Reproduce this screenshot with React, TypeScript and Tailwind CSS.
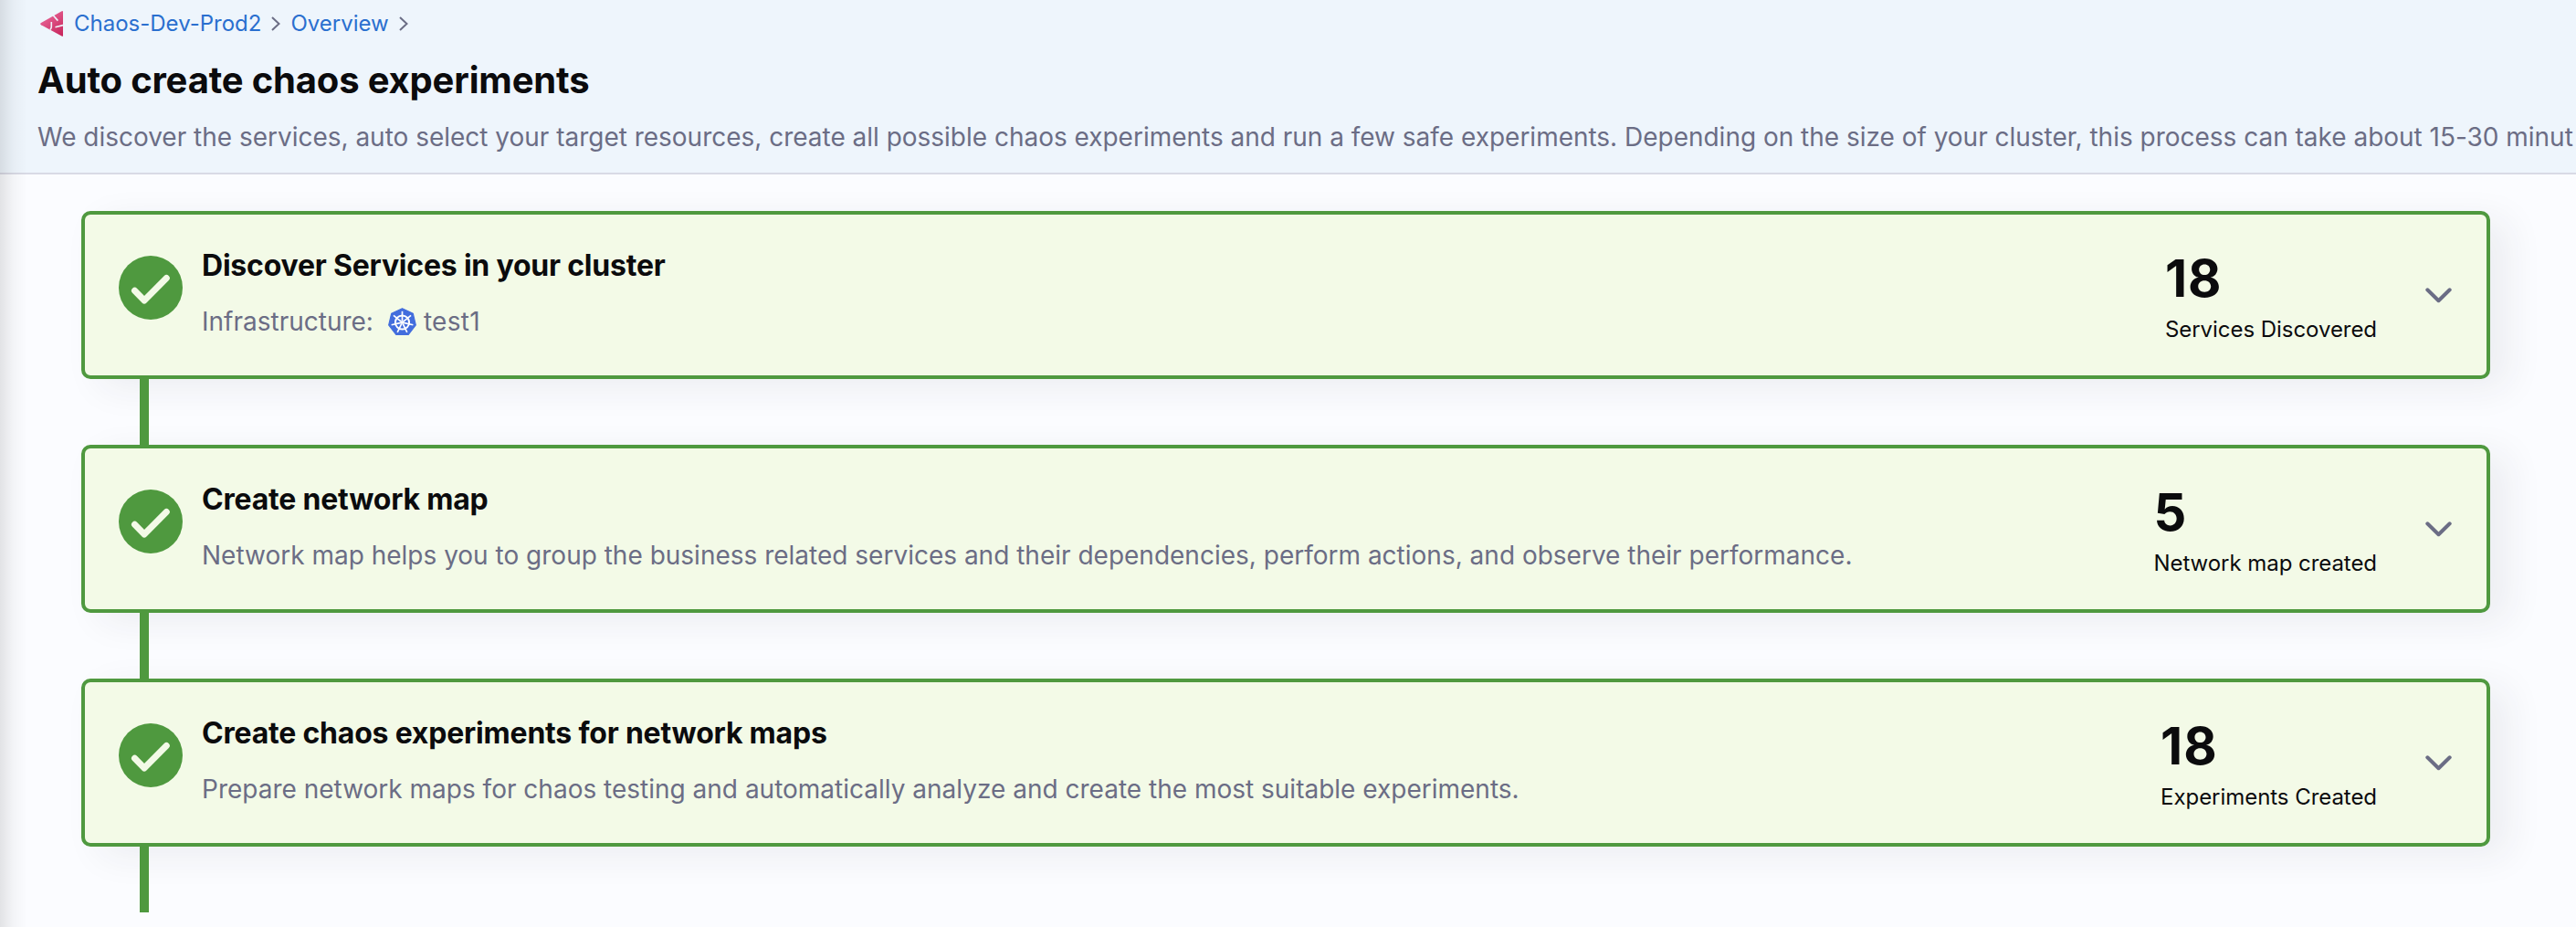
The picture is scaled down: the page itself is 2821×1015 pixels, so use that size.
import React from "react";

const steps = [
  { title: "Discover Services in your cluster", infra: "test1", count: "18", label: "Services Discovered" },
  {
    title: "Create network map",
    text: "Network map helps you to group the business related services and their dependencies, perform actions, and observe their performance.",
    count: "5",
    label: "Network map created",
  },
  {
    title: "Create chaos experiments for network maps",
    text: "Prepare network maps for chaos testing and automatically analyze and create the most suitable experiments.",
    count: "18",
    label: "Experiments Created",
  },
];

function ChaosLogo() {
  return (
    <svg className="h-7 w-[25px]" viewBox="0 0 25 28">
      <defs>
        <linearGradient id="chaos" x1="0.2" y1="0" x2="0.9" y2="1">
          <stop offset="0" stopColor="#ea6a9c" />
          <stop offset="1" stopColor="#c8265c" />
        </linearGradient>
      </defs>
      <path d="M23.600 0.300Q25 -0.300 25 1V27Q25 28.300 23.600 27.600L1 15.300Q-0.600 14.200 1 13.100Z" fill="url(#chaos)" />
      <path d="M14.200 4.800L19.400 10.600M12.300 12V17.500Q12.300 18.500 11 20.500M16.500 17.800L25 15.600" stroke="#eff5fc" strokeWidth="1.600" fill="none" />
    </svg>
  );
}

function BreadcrumbChevron() {
  return (
    <svg className="h-4 w-[10px]" viewBox="0 0 10 16" fill="none" stroke="#6b6d85" strokeWidth="2">
      <path d="M1 1L8.500 8L1 15" />
    </svg>
  );
}

function CheckCircle() {
  return (
    <svg className="h-[70px] w-[70px] shrink-0" viewBox="0 0 70 70">
      <circle cx="35" cy="35" r="35" fill="#4f993f" />
      <path d="M17.500 38.300L28 49L52.300 24.500" fill="none" stroke="#f3fae7" strokeWidth="7" strokeLinecap="round" strokeLinejoin="round" />
    </svg>
  );
}

function KubernetesIcon() {
  const spokes = [0, 1, 2, 3, 4, 5, 6];
  return (
    <svg className="h-[31px] w-[31px]" viewBox="0 0 31 31">
      <path d="M15.500 0.800L27.300 6.300L30.300 19L22.200 29.500H8.800L0.700 19L3.700 6.300Z" fill="#426ddd" stroke="#426ddd" strokeWidth="1.200" strokeLinejoin="round" />
      <g stroke="#fff" fill="none">
        <circle cx="15.500" cy="16" r="7.600" strokeWidth="2" />
        {spokes.map((n) => (
          <path key={n} d="M15.500 14.500V3.800" strokeWidth="1.700" transform={`rotate(${(n * 360) / 7} 15.500 16)`} />
        ))}
      </g>
      <circle cx="15.500" cy="16" r="1.800" fill="#fff" />
    </svg>
  );
}

export default function App() {
  return (
    <div className="relative h-[1015px] overflow-hidden bg-[#fbfcff] font-['Inter',sans-serif] text-[#0b0b0d]">
      <header className="h-[191px] border-b-2 border-[#d9dae5] bg-[#eef5fc] pl-[41px] whitespace-nowrap">
        <nav className="flex h-[52px] items-center pl-[3px] text-[24px] text-[#2a6fcf]">
          <ChaosLogo />
          <a className="ml-3">Chaos-Dev-Prod2</a>
          <span className="mr-[11px] ml-[11px]"><BreadcrumbChevron /></span>
          <a>Overview</a>
          <span className="ml-[11px]"><BreadcrumbChevron /></span>
        </nav>
        <h1 className="mt-[12px] text-[40px] leading-[48px] font-bold tracking-[-0.180px]">Auto create chaos experiments</h1>
        <p className="mt-[18px] text-[28px] leading-[40px] tracking-[-0.015px] text-[#6b6d85]">
          We discover the services, auto select your target resources, create all possible chaos experiments and run a few safe experiments. Depending on the size of your cluster, this process can take about 15-30 minut
        </p>
      </header>
      <main className="pt-10 pr-[94px] pl-[89px]">
        {steps.map((s) => (
          <section key={s.title}>
            <div className="flex h-[184px] rounded-[10px] border-4 border-[#4f993f] bg-[#f3fae7] pr-[38px] pl-[37px] shadow-[20px_10px_40px_rgba(40,41,61,0.07)]">
              <div className="pt-[45px]"><CheckCircle /></div>
              <div className="ml-[21px] flex-1 pt-[36px]">
                <h2 className="text-[32px] leading-[40px] font-bold tracking-[-0.210px]">{s.title}</h2>
                <div className="mt-[21px] flex items-center text-[28px] leading-[40px] text-[#6b6d85]">
                  {s.infra ? (
                    <>
                      <span>Infrastructure:</span>
                      <span className="mr-2 ml-4"><KubernetesIcon /></span>
                      <span className="tracking-[0.300px]">{s.infra}</span>
                    </>
                  ) : (
                    s.text
                  )}
                </div>
              </div>
              <div className="pt-[34px]">
                <div className="text-[56px] leading-[72px] font-bold tracking-[1px]">{s.count}</div>
                <div className="mt-1 text-[24px] leading-[32px] tracking-[-0.050px]">{s.label}</div>
              </div>
              <div className="ml-[53px] flex items-center">
                <svg className="h-[17px] w-[29px]" viewBox="0 0 29 17" fill="none" stroke="#6b6d85" strokeWidth="4" strokeLinecap="round" strokeLinejoin="round">
                  <path d="M2.300 2.300L14.500 14.200L26.700 2.300" />
                </svg>
              </div>
            </div>
            <div className="relative ml-16 h-[72px] w-[10px] bg-[#4f993f]" />
          </section>
        ))}
      </main>
      <div className="pointer-events-none absolute inset-y-0 left-0 w-[30px] bg-gradient-to-r from-black/10 via-black/3 to-transparent" />
    </div>
  );
}
